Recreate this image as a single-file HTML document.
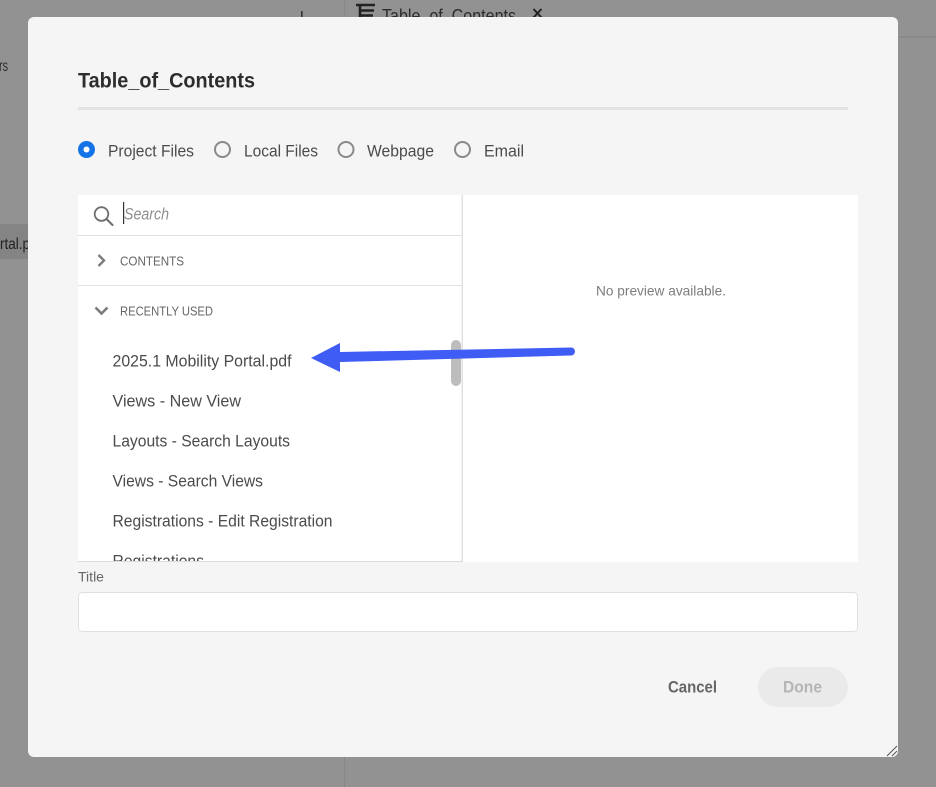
<!DOCTYPE html>
<html lang="en">
<head>
<meta charset="utf-8">
<title>Table_of_Contents</title>
<style>
html,body{margin:0;padding:0;width:936px;height:787px;overflow:hidden;background:#929292}
svg{display:block;position:absolute;left:0;top:0}
text{font-family:"Liberation Sans",sans-serif}
</style>
</head>
<body>
<svg width="936" height="787" viewBox="0 0 936 787" xmlns="http://www.w3.org/2000/svg">
<rect width="936" height="787" fill="#929292"/>
<!-- background app -->
<rect x="344" y="0" width="1" height="787" fill="#878787"/>
<rect x="344" y="36" width="592" height="2" fill="#8a8a8a"/>
<rect x="0" y="224" width="30" height="35" fill="#848484"/>
<text x="-1" y="71" font-size="16" fill="#2c2c2c" textLength="9" lengthAdjust="spacingAndGlyphs">rs</text>
<text x="0" y="249" font-size="16" fill="#222" textLength="30" lengthAdjust="spacingAndGlyphs">rtal.p</text>
<rect x="301" y="11" width="1.6" height="8" fill="#333"/>
<path d="M356 5H375M360 10.500H374M360 15.500H373M360 5V20" stroke="#222" stroke-width="2.600" fill="none"/>
<text x="382" y="22" font-size="18" fill="#2c2c2c" textLength="134" lengthAdjust="spacingAndGlyphs">Table_of_Contents</text>
<path d="M533.500 9L541.500 17.500M541.500 9L533.500 17.500" stroke="#222" stroke-width="2" fill="none"/>
<!-- dialog -->
<rect x="28" y="17" width="870" height="740" rx="6" fill="#f5f5f5"/>
<text x="78" y="87.500" font-size="21" font-weight="700" fill="#2d2d2d" textLength="177" lengthAdjust="spacingAndGlyphs">Table_of_Contents</text>
<rect x="78" y="107" width="770" height="3" fill="#e3e3e3"/>
<!-- radios -->
<circle cx="86.500" cy="149.500" r="8.500" fill="#1473e6"/>
<circle cx="86.500" cy="149.500" r="3" fill="#fff"/>
<circle cx="222.500" cy="149.500" r="7.500" fill="#f5f5f5" stroke="#8a8a8a" stroke-width="2"/>
<circle cx="346" cy="149.500" r="7.500" fill="#f5f5f5" stroke="#8a8a8a" stroke-width="2"/>
<circle cx="462.500" cy="149.500" r="7.500" fill="#f5f5f5" stroke="#8a8a8a" stroke-width="2"/>
<g font-size="17" fill="#4b4b4b">
<text x="108" y="156.500" textLength="86" lengthAdjust="spacingAndGlyphs">Project Files</text>
<text x="244" y="156.500" textLength="74" lengthAdjust="spacingAndGlyphs">Local Files</text>
<text x="367" y="156.500" textLength="67" lengthAdjust="spacingAndGlyphs">Webpage</text>
<text x="484" y="156.500" textLength="40" lengthAdjust="spacingAndGlyphs">Email</text>
</g>
<!-- panels -->
<rect x="78" y="195" width="384" height="367" fill="#fff"/>
<rect x="463" y="195" width="395" height="367" fill="#fff"/>
<rect x="461.500" y="195" width="1.500" height="367" fill="#e1e1e1"/>
<rect x="78" y="561" width="385" height="1" fill="#dcdcdc"/>
<!-- search -->
<circle cx="101.500" cy="214" r="6.800" fill="none" stroke="#6e6e6e" stroke-width="1.800"/>
<path d="M106.500 219L112.500 225" stroke="#6e6e6e" stroke-width="2" stroke-linecap="round"/>
<rect x="123" y="202" width="1.200" height="22" fill="#333"/>
<text x="124" y="219.500" font-size="17" font-style="italic" fill="#8e8e8e" textLength="45" lengthAdjust="spacingAndGlyphs">Search</text>
<rect x="78" y="235" width="384" height="1" fill="#e1e1e1"/>
<!-- contents -->
<path d="M98.500 255L104 260.500L98.500 266" fill="none" stroke="#7c7c7c" stroke-width="2.400"/>
<text x="120" y="265.500" font-size="13" fill="#666" textLength="64" lengthAdjust="spacingAndGlyphs">CONTENTS</text>
<rect x="78" y="285" width="384" height="1" fill="#e1e1e1"/>
<!-- recently used -->
<path d="M95.500 307.500L101.500 313.500L107.500 307.500" fill="none" stroke="#7c7c7c" stroke-width="2.600"/>
<text x="120" y="315.500" font-size="13" fill="#666" textLength="93" lengthAdjust="spacingAndGlyphs">RECENTLY USED</text>
<g font-size="17" fill="#4b4b4b">
<text x="112.500" y="366.500" textLength="179" lengthAdjust="spacingAndGlyphs">2025.1 Mobility Portal.pdf</text>
<text x="112.500" y="406.500" textLength="128.500" lengthAdjust="spacingAndGlyphs">Views - New View</text>
<text x="112.500" y="446.500" textLength="177.500" lengthAdjust="spacingAndGlyphs">Layouts - Search Layouts</text>
<text x="112.500" y="486.500" textLength="150.500" lengthAdjust="spacingAndGlyphs">Views - Search Views</text>
<text x="112.500" y="526.500" textLength="220" lengthAdjust="spacingAndGlyphs">Registrations - Edit Registration</text>
<svg x="78" y="540" width="384" height="21" viewBox="78 540 384 21"><text x="112.500" y="566.500" textLength="91.500" lengthAdjust="spacingAndGlyphs">Registrations</text></svg>
</g>
<!-- scrollbar -->
<rect x="451" y="340" width="10" height="46" rx="5" fill="#bdbdbd"/>
<!-- preview -->
<text x="596" y="295.500" font-size="14" fill="#7d7d7d" textLength="130" lengthAdjust="spacingAndGlyphs">No preview available.</text>
<!-- arrow -->
<path d="M340 343L311 358L340 372L340 362L571 355.500A4 4 0 0 0 571 347.500L340 352Z" fill="#3f5df5"/>
<!-- title -->
<text x="78" y="581.500" font-size="14" fill="#666" textLength="26" lengthAdjust="spacingAndGlyphs">Title</text>
<rect x="78.500" y="592.500" width="779" height="39" rx="4" fill="#fff" stroke="#dfdfdf"/>
<!-- buttons -->
<text x="668" y="692.500" font-size="17" font-weight="700" fill="#666" textLength="49" lengthAdjust="spacingAndGlyphs">Cancel</text>
<rect x="758" y="667" width="90" height="40" rx="20" fill="#eaeaea"/>
<text x="783" y="692.500" font-size="17" font-weight="700" fill="#b5b5b5" textLength="39" lengthAdjust="spacingAndGlyphs">Done</text>
<!-- resize grip -->
<path d="M887 756L897 746M892 756L897 751" stroke="#555" stroke-width="1" fill="none"/>
</svg>
</body>
</html>
